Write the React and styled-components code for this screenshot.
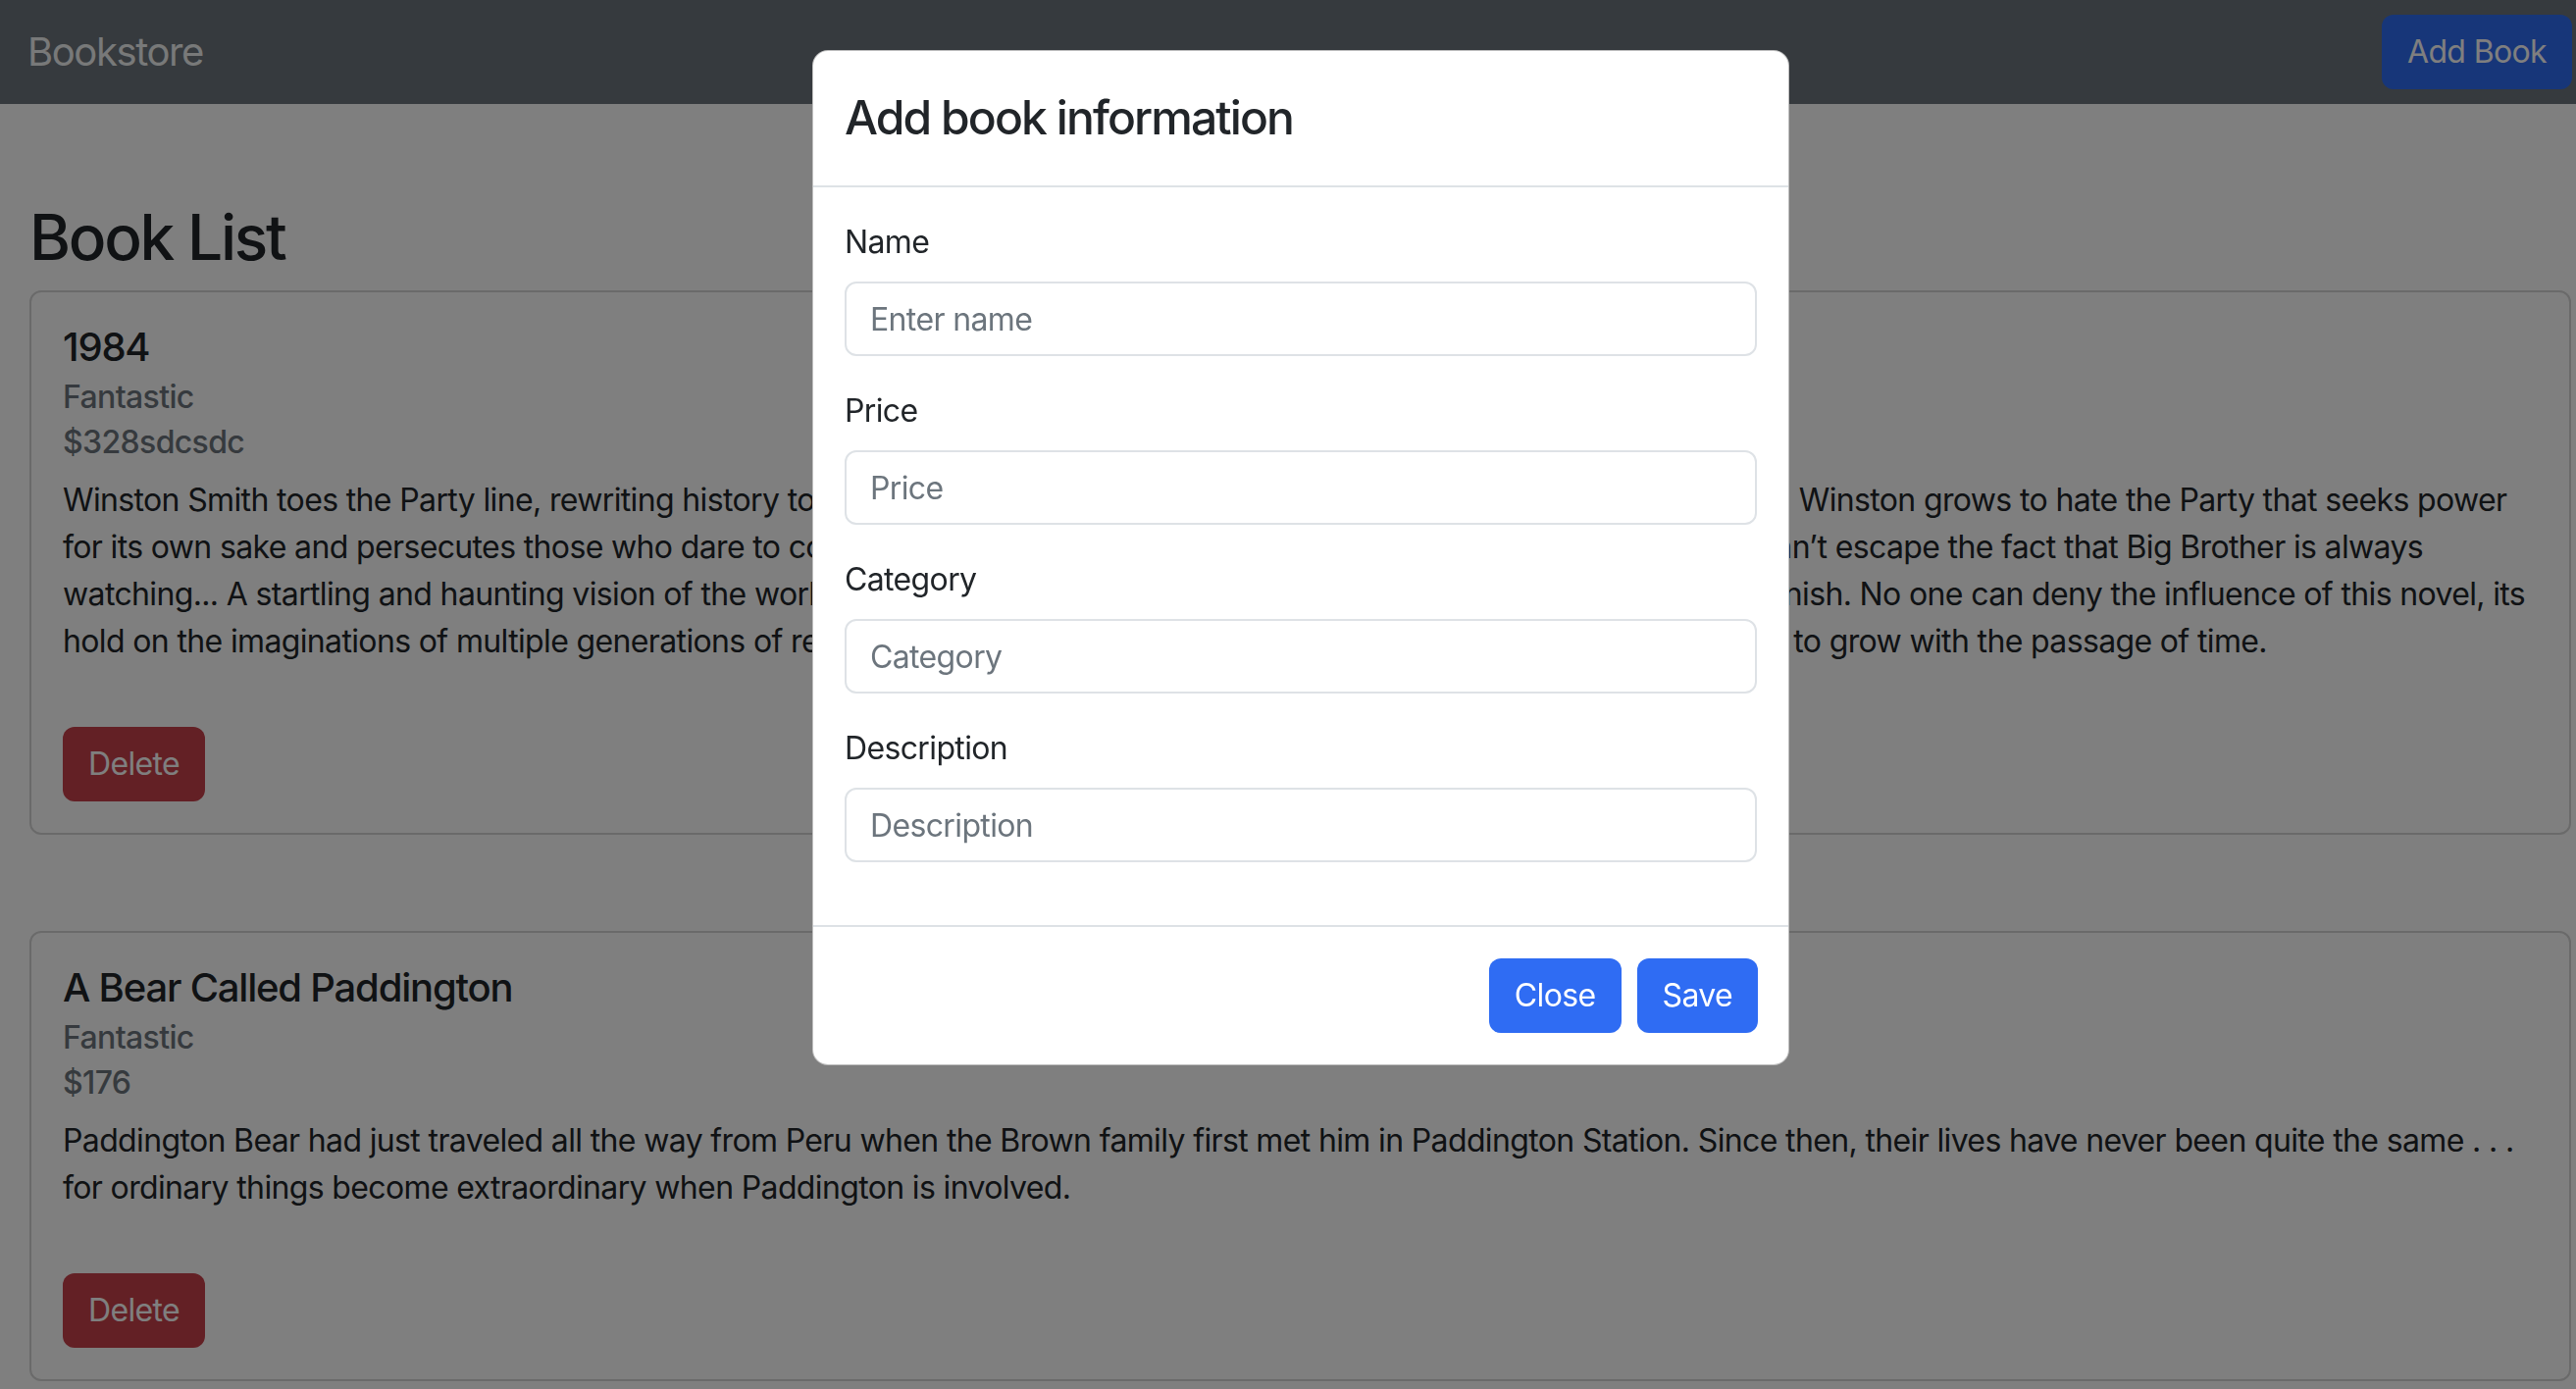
import React from "react";
import styled, { createGlobalStyle } from "styled-components";

const GlobalStyle = createGlobalStyle`
  html, body {
    margin: 0;
    padding: 0;
    overflow: hidden;
    background: #ffffff;
  }
  body {
    font-family: Inter, "Noto Sans", "Liberation Sans", sans-serif;
    font-size: 32px;
    line-height: 48px;
    letter-spacing: -0.02em;
    color: #212529;
  }
  * {
    box-sizing: border-box;
  }
`;

const Navbar = styled.nav`
  height: 106px;
  padding: 16px 4px 16px 28px;
  background: #6c757d;
  display: flex;
  align-items: center;
  justify-content: space-between;
`;

const Brand = styled.a`
  font-size: 40px;
  line-height: 60px;
  letter-spacing: -0.035em;
  color: rgba(255, 255, 255, 0.92);
  text-decoration: none;
`;

const Button = styled.button`
  height: 76px;
  padding: 12px 24px;
  border: 2px solid transparent;
  border-radius: 12px;
  font-family: inherit;
  font-size: 32px;
  line-height: 48px;
  letter-spacing: -0.02em;
  color: #ffffff;
  background: ${(props) => (props.variant === "danger" ? "#c7404a" : "#2f6cf3")};
  margin: ${(props) => props.margin || "0"};
  cursor: pointer;
`;

const Page = styled.main`
  padding: 97px 5px 0 30px;
`;

const Heading = styled.h2`
  margin: 0 0 16px;
  font-size: 64px;
  line-height: 77px;
  font-weight: 500;
  letter-spacing: -0.035em;
`;

const Card = styled.section`
  border: 2px solid #d4d4d4;
  border-radius: 12px;
  padding: 32px;
  margin-bottom: 98px;
  &:last-child {
    margin-bottom: 0;
  }
`;

const CardTitle = styled.h5`
  margin: 0 0 16px;
  font-size: 40px;
  line-height: 48px;
  font-weight: 500;
  letter-spacing: -0.03em;
`;

const CardSubtitle = styled.h6`
  margin: -8px 0 16px;
  font-size: 32px;
  line-height: 38px;
  font-weight: 500;
  color: #6c757d;
`;

const CardText = styled.p`
  margin: 0 0 63px;
`;

const Backdrop = styled.div`
  position: fixed;
  inset: 0;
  background: rgba(0, 0, 0, 0.5);
`;

const ModalLayer = styled.div`
  position: fixed;
  inset: 0;
  padding: 51px 0 0 26px;
  display: flex;
  justify-content: center;
  align-items: flex-start;
`;

const Modal = styled.div`
  width: 996px;
  background: #ffffff;
  border: 1px solid rgba(0, 0, 0, 0.25);
  border-radius: 16px;
  overflow: hidden;
`;

const ModalHeader = styled.div`
  padding: 32px 32px 33px;
  border-bottom: 2px solid #dee2e6;
`;

const ModalTitle = styled.h4`
  margin: 0;
  font-size: 48px;
  line-height: 72px;
  font-weight: 500;
  letter-spacing: -0.04em;
`;

const ModalBody = styled.div`
  padding: 32px;
`;

const Field = styled.div`
  margin-bottom: 32px;
`;

const Label = styled.label`
  display: block;
  margin-bottom: 16px;
  font-size: 32px;
  line-height: 48px;
`;

const Input = styled.input`
  display: block;
  width: 100%;
  height: 76px;
  padding: 12px 24px;
  border: 2px solid #dee2e6;
  border-radius: 12px;
  font-family: inherit;
  font-size: 32px;
  line-height: 48px;
  letter-spacing: -0.02em;
  color: #212529;
  outline: none;
  &::placeholder {
    color: #6c757d;
  }
`;

const ModalFooter = styled.div`
  display: flex;
  justify-content: flex-end;
  padding: 24px 23px 24px 24px;
  border-top: 2px solid #dee2e6;
`;

const books = [
  {
    name: "1984",
    category: "Fantastic",
    price: "328sdcsdc",
    description:
      "Winston Smith toes the Party line, rewriting history to satisfy the demands of the Ministry of Truth. With each lie he writes, Winston grows to hate the Party that seeks power for its own sake and persecutes those who dare to commit thoughtcrimes. But as he starts to think for himself, Winston can\u2019t escape the fact that Big Brother is always watching... A startling and haunting vision of the world, 1984 is so powerful that it is completely convincing from start to finish. No one can deny the influence of this novel, its hold on the imaginations of multiple generations of readers, or the resiliency of its admonitions\u2014a legacy that seems only to grow with the passage of time.",
  },
  {
    name: "A Bear Called Paddington",
    category: "Fantastic",
    price: "176",
    description:
      "Paddington Bear had just traveled all the way from Peru when the Brown family first met him in Paddington Station. Since then, their lives have never been quite the same . . . for ordinary things become extraordinary when Paddington is involved.",
  },
];

const fields = [
  { label: "Name", placeholder: "Enter name" },
  { label: "Price", placeholder: "Price" },
  { label: "Category", placeholder: "Category" },
  { label: "Description", placeholder: "Description" },
];

const App = () => {
  return (
    <>
      <GlobalStyle />
      <Navbar>
        <Brand href="#">Bookstore</Brand>
        <Button>Add Book</Button>
      </Navbar>
      <Page>
        <Heading>Book List</Heading>
        {books.map((book) => (
          <Card key={book.name}>
            <CardTitle>{book.name}</CardTitle>
            <CardSubtitle>{book.category}</CardSubtitle>
            <CardSubtitle>${book.price}</CardSubtitle>
            <CardText>{book.description}</CardText>
            <Button variant="danger">Delete</Button>
          </Card>
        ))}
      </Page>
      <Backdrop />
      <ModalLayer>
        <Modal>
          <ModalHeader>
            <ModalTitle>Add book information</ModalTitle>
          </ModalHeader>
          <ModalBody>
            {fields.map((field) => (
              <Field key={field.label}>
                <Label>{field.label}</Label>
                <Input placeholder={field.placeholder} />
              </Field>
            ))}
          </ModalBody>
          <ModalFooter>
            <Button margin="8px">Close</Button>
            <Button margin="8px">Save</Button>
          </ModalFooter>
        </Modal>
      </ModalLayer>
    </>
  );
};

export default App;
